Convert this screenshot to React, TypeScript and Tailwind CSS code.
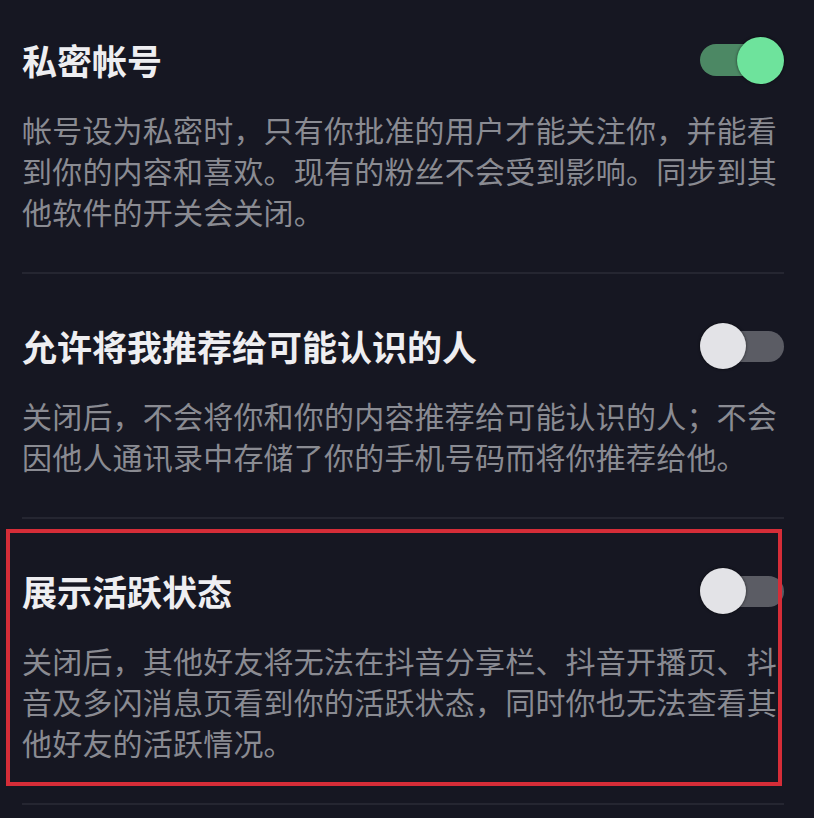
import React from 'react';

type Item = {
  title: string;
  desc: string;
  on: boolean;
  marked?: boolean;
};

const items: Item[] = [
  {
    title: '私密帐号',
    desc: '帐号设为私密时，只有你批准的用户才能关注你，并能看到你的内容和喜欢。现有的粉丝不会受到影响。同步到其他软件的开关会关闭。',
    on: true,
  },
  {
    title: '允许将我推荐给可能认识的人',
    desc: '关闭后，不会将你和你的内容推荐给可能认识的人；不会因他人通讯录中存储了你的手机号码而将你推荐给他。',
    on: false,
  },
  {
    title: '展示活跃状态',
    desc: '关闭后，其他好友将无法在抖音分享栏、抖音开播页、抖音及多闪消息页看到你的活跃状态，同时你也无法查看其他好友的活跃情况。',
    on: false,
    marked: true,
  },
];

// switch: knob overflows the pill vertically, centred by the flex row
const Toggle = ({ on }: { on: boolean }) =>
  on ? (
    <div className="mr-[4px] flex h-[32px] w-[80px] shrink-0 items-center justify-end rounded-full bg-[#4c8864]">
      <div className="-mr-[4px] h-[47px] w-[47px] shrink-0 rounded-full bg-[#6ee39c] shadow-[0_0_3px_rgba(0,0,0,0.6)]" />
    </div>
  ) : (
    <div className="flex h-[31px] w-[84px] shrink-0 items-center rounded-full bg-[#5b5c64]">
      <div className="h-[46px] w-[46px] shrink-0 rounded-full bg-[#e3e3e7] shadow-[0_0_3px_rgba(0,0,0,0.6)]" />
    </div>
  );

const Row = ({ item, first }: { item: Item; first: boolean }) => (
  <div
    className={`relative border-b-2 border-[#252631] pb-[40px] ${first ? 'pt-[36px]' : 'pt-[48px]'}`}
  >
    <div className="flex h-[48px] items-center justify-between">
      <span className="text-[35px] font-bold leading-[48px] text-[#eeeef1]">
        {item.title}
      </span>
      <Toggle on={item.on} />
    </div>
    <p className="mt-[25px] text-[30px] leading-[41px] tracking-[0.2px] text-[#8a8b92]">
      {item.desc}
    </p>
    {item.marked && (
      <div className="pointer-events-none absolute -left-[16px] right-[2px] top-[10px] bottom-[17px] border-4 border-[#d52d38]" />
    )}
  </div>
);

export default function App() {
  return (
    <div className="h-[818px] w-full overflow-hidden bg-[#161722] pl-[22px] pr-[30px] font-['Noto_Sans_CJK_SC','Noto_Sans',sans-serif]">
      {items.map((item, i) => (
        <Row key={item.title} item={item} first={i === 0} />
      ))}
    </div>
  );
}
